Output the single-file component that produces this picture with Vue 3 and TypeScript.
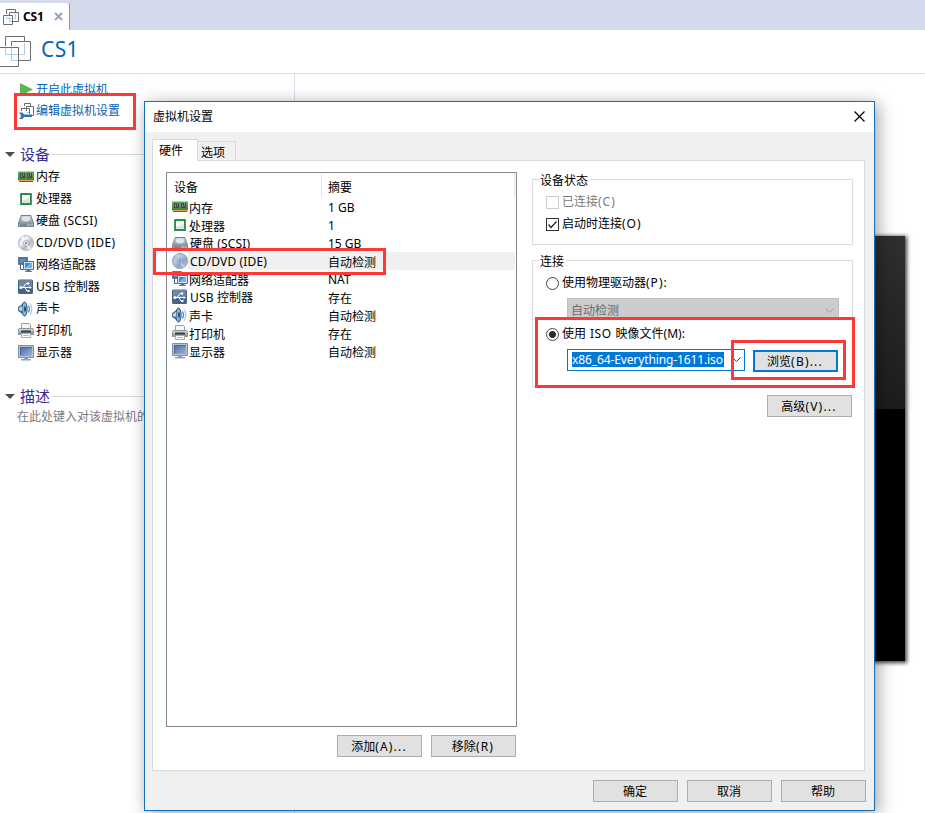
<script setup lang="ts">
interface Device {
  icon: string
  name: string
  summary: string
}

const devices: Device[] = [
  { icon: 'memory', name: '内存', summary: '1 GB' },
  { icon: 'cpu', name: '处理器', summary: '1' },
  { icon: 'disk', name: '硬盘 (SCSI)', summary: '15 GB' },
  { icon: 'cd', name: 'CD/DVD (IDE)', summary: '自动检测' },
  { icon: 'network', name: '网络适配器', summary: 'NAT' },
  { icon: 'usb', name: 'USB 控制器', summary: '存在' },
  { icon: 'sound', name: '声卡', summary: '自动检测' },
  { icon: 'printer', name: '打印机', summary: '存在' },
  { icon: 'display', name: '显示器', summary: '自动检测' },
]
const selected = 'cd'

// Latin runs are tracked slightly wider than the Han text around them.
const isHan = (text: string): boolean => /^[^\x00-\x7f]+$/.test(text)
const runs = (text: string): string[] => text.split(/([\x00-\x7f]+)/).filter(Boolean)
</script>

<template>
  <div class="app">
    <svg class="defs" aria-hidden="true">
      <defs>
        <linearGradient id="g-steel" x1="0" y1="0" x2="0" y2="1">
          <stop offset="0" stop-color="#d5dce3" /><stop offset="1" stop-color="#8b98a6" />
        </linearGradient>
        <linearGradient id="g-disc" x1="0" y1="0" x2="1" y2="1">
          <stop offset="0" stop-color="#b9c0cb" /><stop offset=".35" stop-color="#f1f3f6" />
          <stop offset=".6" stop-color="#b4bbc7" /><stop offset="1" stop-color="#eceef2" />
        </linearGradient>
        <linearGradient id="g-screen" x1="0" y1="0" x2="1" y2="1">
          <stop offset="0" stop-color="#4a6ba3" /><stop offset="1" stop-color="#9db4d6" />
        </linearGradient>
        <linearGradient id="g-memory" x1="0" y1="0" x2="0" y2="1">
          <stop offset="0" stop-color="#5fae5f" /><stop offset="1" stop-color="#2f7d3a" />
        </linearGradient>
      </defs>
      <symbol id="vm" viewBox="0 0 32 33">
        <path d="M5.500 12V2.500H24.500V8M11.500 12V7.500H30.500V26.500H19M0 13.500H18.500V32.500H0" fill="none" stroke="#6d6e70" />
        <path d="M5.500 14V20.500H18M24.500 9V20.500H20M11.500 14V26.500H18" fill="none" stroke="#a9cde5" />
      </symbol>
      <symbol id="vm-small" viewBox="0 0 16 16">
        <path d="M3.500 5V.5H12.500V3M6.500 6V3.500H15.500V12.500H10M.5 6.500H9.500V15.500H.5Z" fill="none" stroke="#6d6e70" />
        <path d="M3.500 8V9.500H9M12.500 5V9.500H11M6.500 8V12.500H9" fill="none" stroke="#a9cde5" />
      </symbol>
      <symbol id="i-memory" viewBox="0 0 16 16">
        <path d="M0 2.500h16v9h-1V13H1v-1.500H0z" fill="url(#g-memory)" />
        <path d="M2 4h5v5H2zM9 4h5v5H9z" fill="#4a4653" />
        <path d="M3 5h1v3H3zM5 4h1v3H5zM10 5h1v3h-1zM12 4h1v3h-1z" fill="#85838e" />
        <path d="M1 11.500h14" stroke="#eea64d" />
      </symbol>
      <symbol id="i-cpu" viewBox="0 0 16 16">
        <path d="M2 2h12v12H2z" fill="#2b8c4e" />
        <path d="M2.500 2v12M13.500 2v12" stroke="#61ad76" stroke-dasharray="1 1" />
        <path d="M4 4h8v8H4z" fill="#e0e3e2" /><path d="M4 4h8v3l-8 3z" fill="#f7f7f7" />
      </symbol>
      <symbol id="i-disk" viewBox="0 0 16 16">
        <path d="M3 2h10l3 8v4H0v-4z" fill="#75808d" />
        <path d="M3.500 3h9l2.500 7H1z" fill="url(#g-steel)" />
        <ellipse cx="8" cy="6" rx="4" ry="2.400" fill="#e1e6eb" />
        <path d="M1 10.500h14V13H1z" fill="#a5afba" /><path d="M2 12h7" stroke="#55606c" /><path d="M12 12h2" stroke="#76b875" />
      </symbol>
      <symbol id="i-cd" viewBox="0 0 16 16">
        <circle cx="8" cy="8" r="7.500" fill="url(#g-disc)" stroke="#a6abb5" stroke-width=".8" />
        <path d="M8 8 3 2.500 5.500 1zM8 8l5 5.500-2.500 1.300z" fill="#fff" opacity=".8" />
        <circle cx="8" cy="8" r="2.500" fill="#eceef1" stroke="#a4aab4" stroke-width=".8" /><circle cx="8" cy="8" r="1" fill="#777e8b" />
      </symbol>
      <symbol id="i-network" viewBox="0 0 16 16">
        <path d="M.5.500h9v7h-9z" fill="#4170ac" stroke="#617a9a" /><path d="M2 2h6v4H2z" fill="#688fbd" />
        <path d="M2.500 8v4.500H5" fill="none" stroke="#365f99" />
        <path d="M5.500 4.500h10v8h-10z" fill="#d8e5ef" stroke="#536a84" /><path d="M7 6h7v5H7z" fill="#2b91dc" />
        <path d="M8 10 13 6h1v5H8z" fill="#64b9ee" /><path d="M9 13h3v1H9zM7 14.500h7" stroke="#6d7d91" />
      </symbol>
      <symbol id="i-usb" viewBox="0 0 16 16">
        <rect x="0" y=".5" width="15" height="14.500" rx="1.500" fill="#4b6483" />
        <path d="M1 1h13v6L1 10z" fill="#6e86a2" />
        <path d="M3 8.500h10M5 8.500l3-4h2M7 8.500l2 3.500h2" fill="none" stroke="#fff" />
        <circle cx="3" cy="8.500" r="1.500" fill="#fff" /><circle cx="10" cy="4.500" r="1.200" fill="#fff" />
        <path d="M9.500 11h2v2h-2zM11.500 7l2.500 1.500-2.500 1.500z" fill="#fff" />
      </symbol>
      <symbol id="i-sound" viewBox="0 0 16 16">
        <path d="M0 6 3 4 7 .5l1.500 3v9L7 15.500 3 12 0 10z" fill="#4f7296" />
        <ellipse cx="6.500" cy="8" rx="2.600" ry="7" fill="#86b4e0" stroke="#365779" />
        <path d="M1 7l3-2v5l-3-1z" fill="#c3d5e4" /><ellipse cx="7" cy="8" rx="1" ry="3" fill="#244971" />
        <path d="M10.500 4.500q2 3.500 0 7" fill="none" stroke="#448cd0" stroke-width="1.200" />
        <path d="M12.500 2.500q3 5.500 0 11" fill="none" stroke="#98bddc" />
      </symbol>
      <symbol id="i-printer" viewBox="0 0 16 16">
        <path d="M3.500.500h8l1 1V6h-9z" fill="#f4f5f6" stroke="#9a9fa4" />
        <path d="M1 5h14l1 2v5H0V7z" fill="#8f979f" /><path d="M1 6h14v3H1z" fill="#c9cdd1" />
        <path d="M3 7.500h10v2H3z" fill="#353c43" /><path d="M3.500 10.500h9v4h-9z" fill="#fff" stroke="#a5aaaf" />
        <path d="M5 12.500h6" stroke="#bbb" /><path d="M14 9h1" stroke="#67b865" />
      </symbol>
      <symbol id="i-display" viewBox="0 0 16 16">
        <path d="M.5.500h15v12H.5z" fill="#b6c5d8" stroke="#7b8fab" />
        <path d="M2 2h12v9H2z" fill="url(#g-screen)" /><path d="M2.500 10.500V2.500H14" fill="none" stroke="#4a6896" />
        <path d="M6 13h4v1H6zM3 14h10v1.500H3z" fill="#8fa1b9" />
      </symbol>
    </svg>

    <header class="tabs">
      <div class="tab">
        <svg class="tab-icon"><use href="#vm-small" /></svg>
        <b>CS1</b>
        <svg class="tab-close" viewBox="0 0 9 9"><path d="M1 1l7 7M8 1 1 8" stroke="#98a1c8" stroke-width="2" /></svg>
      </div>
    </header>
    <div class="heading">
      <svg class="vm-icon"><use href="#vm" /></svg>
      <h1>CS1</h1>
    </div>

    <main class="workspace">
      <aside class="sidebar">
        <div class="action power">
          <svg class="play" viewBox="0 0 13 13"><path d="M0 0 13 6.500 0 13z" fill="#57b657" /></svg>
          <span>开启此虚拟机</span>
        </div>
        <div class="action edit">
          <svg class="edit-icon" viewBox="0 0 16 16">
            <path d="M6.500 3V.5H12.500V3M8.500 8V3.500H15.500V12.500H14M3.500 8V5.500H11.500V11" fill="none" stroke="#6d6e70" />
            <path d="M6.500 4V5M8.500 9.500H11" fill="none" stroke="#a9cde5" />
            <path d="M1 9.500h3.500l1.500 2h8v2.500H6l-1.500 2H1l1.800-1.800v-2.500z" fill="#2d70b4" />
          </svg>
          <span>编辑虚拟机设置</span>
          <i class="mark mark-edit"></i>
        </div>
        <div class="section"><i class="caret"></i><h2>设备</h2><hr /></div>
        <ul class="side-list">
          <li v-for="d in devices" :key="d.icon">
            <svg class="icon"><use :href="'#i-' + d.icon" /></svg>
            <div><span v-for="r in runs(d.name)" :key="r" :class="{ latin: !isHan(r) }">{{ r }}</span></div>
          </li>
        </ul>
        <div class="section second"><i class="caret"></i><h2>描述</h2><hr /></div>
        <p class="note">在此处键入对该虚拟机的描述。</p>
      </aside>
      <div class="preview"></div>
    </main>

    <section class="dialog">
      <div class="titlebar">
        <span>虚拟机设置</span>
        <svg class="close" viewBox="0 0 11 11"><path d="M.5.500l10 10M10.500.500l-10 10" stroke="#000" stroke-width="1.200" /></svg>
      </div>
      <div class="dialog-tabs">
        <div class="dtab active">硬件</div>
        <div class="dtab">选项</div>
      </div>
      <div class="panel">
        <div class="left">
          <div class="table">
            <div class="thead"><span>设备</span><span>摘要</span></div>
            <div v-for="d in devices" :key="d.icon" class="row" :class="{ sel: d.icon === selected }">
              <svg class="icon"><use :href="'#i-' + d.icon" /></svg>
              <span class="name" :class="{ han: isHan(d.name) }"><span v-for="r in runs(d.name)" :key="r" :class="{ 'list-latin': !isHan(r) }">{{ r }}</span></span>
              <span class="sum" :class="{ han: isHan(d.summary) }">{{ d.summary }}</span>
              <i v-if="d.icon === selected" class="tint"></i>
              <i v-if="d.icon === selected" class="mark mark-row"></i>
            </div>
          </div>
          <div class="buttons">
            <button class="btn">添加<span class="key">(A)...</span></button>
            <button class="btn">移除<span class="key">(R)</span></button>
          </div>
        </div>

        <div class="right">
          <div class="group state">
            <span class="legend">设备状态</span>
            <label class="opt off"><i class="box"></i><span>已连接<span class="wide">(C)</span></span></label>
            <label class="opt">
              <i class="box"><svg viewBox="0 0 11 11"><path d="M1.500 5.500 4 8.500 9.500 2.500" fill="none" stroke="#222" stroke-width="1.200" /></svg></i><span>启动时连接<span class="wide">(O)</span></span>
            </label>
          </div>
          <div class="group conn">
            <span class="legend">连接</span>
            <label class="opt"><i class="radio"></i><span>使用物理驱动器<span class="wide">(P):</span></span></label>
            <div class="combo disabled">
              <span>自动检测</span>
              <svg class="chev" viewBox="0 0 9 5"><path d="M.5.500l4 4 4-4" fill="none" stroke="#a0a0a0" /></svg>
            </div>
            <label class="opt iso"><i class="radio on"></i><span>使用<span class="iso-word">ISO</span>映像文件(M):</span></label>
            <div class="file-row">
              <div class="combo file">
                <span class="hl">x86_64-Everything-1611.iso</span>
                <svg class="chev" viewBox="0 0 9 5"><path d="M.5.500l4 4 4-4" fill="none" stroke="#444" /></svg>
              </div>
              <button class="btn focus">浏览<span class="key">(B)...</span></button>
            </div>
            <i class="mark mark-iso"></i>
            <i class="mark mark-browse"></i>
          </div>
          <button class="btn advanced">高级<span class="key">(V)...</span></button>
        </div>
      </div>
      <footer class="footer">
        <button class="btn">确定</button>
        <button class="btn">取消</button>
        <button class="btn">帮助</button>
      </footer>
    </section>
  </div>
</template>

<style>
body {
  margin: 0;
  overflow: hidden;
}
</style>

<style scoped>
* {
  box-sizing: border-box;
}
.app {
  position: relative;
  width: 925px;
  height: 813px;
  overflow: hidden;
  background: #fff;
  color: #000;
  font: 12px/18px "Noto Sans", "Noto Sans CJK SC", sans-serif;
  white-space: nowrap;
  display: flex;
  flex-direction: column;
}
.defs {
  position: absolute;
  width: 0;
  height: 0;
}
svg {
  flex: none;
  display: block;
}
.icon {
  width: 16px;
  height: 16px;
}
.latin {
  letter-spacing: 0.35px;
  white-space: pre;
}
.list-latin {
  letter-spacing: 0.15px;
  white-space: pre;
}
.wide {
  letter-spacing: 1px;
}
.key {
  letter-spacing: 1.2px;
}
.tabs {
  height: 30px;
  flex: none;
  padding-top: 3px;
  background: #d4daec;
}
.tab {
  width: 70px;
  height: 27px;
  display: flex;
  align-items: center;
  padding-left: 3px;
  background: #fff;
  border-right: 1px solid #8791c3;
  border-top-right-radius: 3px;
}
.tab-icon {
  width: 16px;
  height: 16px;
}
.tab b {
  width: 31px;
  margin-left: 4px;
  font-size: 12px;
  letter-spacing: -0.1px;
}
.tab-close {
  width: 9px;
  height: 9px;
}
.heading {
  height: 44px;
  flex: none;
  display: flex;
  border-bottom: 1px solid #d5e0ee;
}
.vm-icon {
  width: 32px;
  height: 33px;
  margin-top: 4px;
}
h1 {
  margin: 3px 0 0 9px;
  font: 400 21px/32px "Noto Sans", sans-serif;
  letter-spacing: 0.4px;
  color: #0563b8;
}
.workspace {
  flex: 1;
  display: flex;
}
.sidebar {
  width: 295px;
  border-right: 1px solid #d5e0ee;
  padding-top: 5px;
}
.action {
  position: relative;
  height: 22px;
  display: flex;
  align-items: center;
  color: #0563b8;
}
.power {
  height: 21px;
  padding-left: 20px;
}
.play {
  width: 13px;
  height: 13px;
  margin-right: 3px;
}
.edit {
  padding-left: 18px;
  gap: 2px;
}
.edit-icon {
  width: 16px;
  height: 16px;
}
.section {
  height: 22px;
  margin-top: 21px;
  padding-left: 5px;
  display: flex;
  align-items: center;
}
.caret {
  border: 5px solid transparent;
  border-top-color: #4a4d52;
  border-bottom: 0;
}
h2 {
  margin: 0 2px 0 5px;
  font-size: 15px;
  font-weight: 400;
  line-height: 22px;
  color: #3d2c98;
}
hr {
  flex: 1;
  margin: 0;
  border: 0;
  border-top: 1px solid #d8d8d8;
}
.side-list {
  list-style: none;
  margin: 0;
  padding: 1px 0 0 18px;
}
.side-list li {
  height: 22px;
  display: flex;
  align-items: center;
  gap: 2px;
}
.note {
  margin: 1px 0 0;
  padding-left: 17px;
  color: #7a7a7a;
}
.preview {
  width: 399px;
  height: 425px;
  margin: 162px 0 0 211px;
  background: linear-gradient(#2d302f 0, #1c1c1c 173px, #000 173px);
  box-shadow: 1px 1px 4px 1px rgba(0, 0, 0, 0.75);
}

/* modal window */
.dialog {
  position: absolute;
  left: 144px;
  top: 101px;
  width: 731px;
  height: 710px;
  display: flex;
  flex-direction: column;
  background: #f0f0f0;
  border: 1px solid #146fb9;
  box-shadow: 3px 3px 16px rgba(0, 0, 0, 0.38);
}
.titlebar {
  height: 30px;
  flex: none;
  padding: 0 9px 2px 8px;
  display: flex;
  align-items: center;
  justify-content: space-between;
  background: #fff;
}
.titlebar span {
  padding-top: 1px;
}
.close {
  width: 11px;
  height: 11px;
}
.dialog-tabs {
  flex: none;
  display: flex;
  align-items: flex-end;
  height: 29px;
  padding: 7px 0 0 7px;
  margin-bottom: -1px;
  z-index: 1;
}
.dtab {
  width: 38px;
  height: 20px;
  padding-left: 3px;
  line-height: 22px;
  border: 1px solid #d9d9d9;
  border-left: 0;
}
.dtab.active {
  width: 46px;
  height: 22px;
  padding-left: 6px;
  border-left: 1px solid #d9d9d9;
  border-bottom: 0;
  background: #fff;
}
.panel {
  height: 611px;
  flex: none;
  margin: 0 9px 0 7px;
  border: 1px solid #d9d9d9;
  background: #fff;
  display: flex;
  padding: 11px 11px 0 13px;
  gap: 15px;
}
.left {
  width: 351px;
}
.table {
  height: 555px;
  padding: 1px;
  border: 1px solid #828790;
}
.thead {
  height: 24px;
  display: flex;
  line-height: 27px;
}
.thead span {
  height: 23px;
  width: 154px;
  padding-left: 6px;
  border-right: 1px solid #e3e3e3;
}
.thead span:last-child {
  width: 193px;
}
.row {
  position: relative;
  display: flex;
  height: 18px;
  padding-left: 4px;
}
.row .name {
  width: 133px;
  padding-top: 1px;
  padding-left: 2px;
}
.row .icon {
  margin-top: 1px;
}
.row .sum {
  flex: 1;
  padding-top: 1px;
  padding-left: 7px;
}
.row .han {
  padding-top: 2px;
}
.row .name.han {
  padding-left: 1px;
}
.row.sel .name,
.row.sel .sum {
  background: #f0f0f0;
}
.tint {
  position: absolute;
  left: 4px;
  top: 1px;
  width: 16px;
  height: 16px;
  border-radius: 8px;
  background: rgba(70, 120, 200, 0.32);
}
.buttons {
  display: flex;
  justify-content: flex-end;
  gap: 9px;
  margin-top: 8px;
  padding-right: 1px;
}
.btn {
  width: 85px;
  height: 22px;
  padding: 1px 1px 0 0;
  font: inherit;
  line-height: 19px;
  color: #000;
  background: #e1e1e1;
  border: 1px solid #adadad;
  border-radius: 0;
  text-align: center;
}
.btn.focus {
  border: 2px solid #0078d7;
  line-height: 17px;
}
.right {
  width: 321px;
  display: flex;
  flex-direction: column;
  padding-top: 7px;
}
.group {
  position: relative;
  border: 1px solid #dcdcdc;
  padding-left: 13px;
}
.legend {
  position: absolute;
  left: 6px;
  top: -8px;
  padding: 0 2px 0 1px;
  line-height: 18px;
  background: #fff;
}
.state {
  height: 66px;
  padding-top: 11px;
}
.conn {
  height: 127px;
  margin-top: 15px;
  padding-top: 13px;
}
.opt {
  display: flex;
  align-items: center;
  height: 22px;
  gap: 3px;
}
.conn .opt {
  height: 18px;
}
.off {
  color: #7a7a7a;
}
.box {
  width: 13px;
  height: 13px;
  border: 1px solid #333;
  background: #fff;
}
.off .box {
  border-color: #ccc;
}
.radio {
  width: 13px;
  height: 13px;
  border: 1px solid #444;
  border-radius: 50%;
  background: #fff;
}
.radio.on {
  background: radial-gradient(circle, #2b2b2b 3px, #fff 4px);
}
.iso-word {
  margin: 0 4px;
  letter-spacing: 0.5px;
}
.combo {
  display: flex;
  align-items: center;
  justify-content: space-between;
  margin-left: 21px;
}
.combo.disabled {
  width: 272px;
  height: 22px;
  margin-top: 6px;
  padding: 3px 4px 0 3px;
  color: #6d6d6d;
  background: #ccc;
  border: 1px solid #bfbfbf;
}
.chev {
  width: 9px;
  height: 5px;
}
.conn .iso {
  margin-top: 5px;
}
.file-row {
  display: flex;
  margin-top: 6px;
}
.combo.file {
  width: 178px;
  height: 22px;
  padding: 0 3px 1px 4px;
  border: 1px solid #0078d7;
  background: #fff;
}
.hl {
  width: 152px;
  height: 15px;
  line-height: 15px;
  letter-spacing: -0.12px;
  color: #fff;
  background: #0078d7;
}
.file-row .btn {
  margin: 1px 0 0 8px;
}
.advanced {
  align-self: flex-end;
  margin: 8px 1px 0 0;
}
.footer {
  display: flex;
  justify-content: flex-end;
  gap: 9px;
  padding: 9px 8px 0 0;
}

/* red callout frames */
.mark {
  position: absolute;
  border: 3px solid #fd3838;
  z-index: 3;
}
.mark-edit {
  left: 14px;
  top: -7px;
  width: 122px;
  height: 37px;
}
.mark-row {
  left: -15px;
  top: -4px;
  width: 233px;
  height: 27px;
}
.mark-iso {
  left: 2px;
  top: 56px;
  width: 320px;
  height: 71px;
}
.mark-browse {
  left: 198px;
  top: 79px;
  width: 115px;
  height: 40px;
}
</style>
